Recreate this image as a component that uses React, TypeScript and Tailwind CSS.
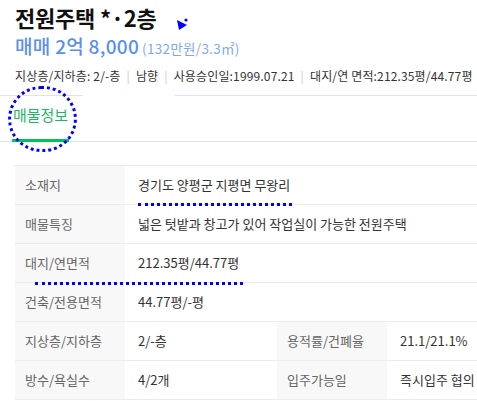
import React from 'react';

/* ── Data ───────────────────────────────────────────────── */
const INFO_ITEMS = ['지상층/지하층: 2/-층', '남향', '사용승인일:1999.07.21', '대지/연 면적:212.35평/44.77평'];

const WIDE_ROWS = [
  { label: '소재지', value: '경기도 양평군 지평면 무왕리' },
  { label: '매물특징', value: '넓은 텃밭과 창고가 있어 작업실이 가능한 전원주택' },
  { label: '대지/연면적', value: '212.35평/44.77평' },
  { label: '건축/전용면적', value: '44.77평/-평' },
];

const SPLIT_ROWS = [
  { label: '지상층/지하층', value: '2/-층', label2: '용적률/건폐율', value2: '21.1/21.1%' },
  { label: '방수/욕실수', value: '4/2개', label2: '입주가능일', value2: '즉시입주 협의' },
];

const font = { fontFamily: '"Noto Sans CJK KR", "Noto Sans", sans-serif' };

/* ── Annotation helpers (blue marks drawn over the capture) ─ */
function DottedLine({ className }: { className: string }) {
  return <div className={`absolute h-[3px] border-t-[3px] border-dotted border-[#0000ff] ${className}`} />;
}

export default function App() {
  return (
    <div style={font} className="relative w-[477px] h-[401px] overflow-hidden bg-white text-[#333]">
      {/* Header */}
      <div className="px-[15px] pt-[1px]">
        <h1 className="text-[22px] leading-[32px] font-bold text-[#111] tracking-[-0.2px]">전원주택 *·2층</h1>
        <div className="flex items-baseline gap-[3px]">
          <span className="text-[19px] leading-[26px] font-medium text-[#5a8fec] tracking-[0.3px]">매매 2억 8,000</span>
          <span className="text-[13.5px] text-[#7fa9ee] tracking-[0.3px]">(132만원/3.3㎡)</span>
        </div>
        <div className="flex items-center mt-[9px] text-[12px] leading-[16px] text-[#333] whitespace-nowrap tracking-[0.15px]">
          {INFO_ITEMS.map((item, i) => (
            <React.Fragment key={item}>
              {i > 0 && <span className="mx-[6px] text-[#ccc]">|</span>}
              <span>{item}</span>
            </React.Fragment>
          ))}
        </div>
      </div>

      {/* Tabs */}
      <div className="flex mt-[11px]">
        <div className="w-[83px] border-t border-[#e2e2e2]" />
        <div className="w-[92px]" />
        <div className="flex-1 border-t border-[#e2e2e2]" />
      </div>
      <div className="border-b border-[#e2e2e2] h-[46px] flex items-end">
        <div className="ml-[12px] w-[57px] h-[46px] flex items-center justify-center border-b-[3px] border-[#00c35a] -mb-[1px]">
          <span className="text-[15px] text-[#1cb860] pb-[4px]">매물정보</span>
        </div>
      </div>

      {/* Detail table */}
      <div className="ml-[15px] mt-[23px] w-[520px] border-t border-[#e8e8e8] text-[13px]">
        {WIDE_ROWS.map(row => (
          <div key={row.label} className="grid grid-cols-[110px_1fr] h-[39px] border-b border-[#ececec]">
            <div className="bg-[#f8f8f8] pl-[10px] flex items-center text-[#666]">{row.label}</div>
            <div className="pl-[13px] flex items-center text-[#333]">{row.value}</div>
          </div>
        ))}
        {SPLIT_ROWS.map(row => (
          <div key={row.label} className="grid grid-cols-[110px_152px_110px_1fr] h-[39px] border-b border-[#ececec]">
            <div className="bg-[#f8f8f8] pl-[10px] flex items-center text-[#666]">{row.label}</div>
            <div className="pl-[13px] flex items-center text-[#333]">{row.value}</div>
            <div className="bg-[#f8f8f8] pl-[10px] flex items-center text-[#666]">{row.label2}</div>
            <div className="pl-[13px] flex items-center text-[#333] whitespace-nowrap">{row.value2}</div>
          </div>
        ))}
      </div>

      {/* Annotations */}
      <svg className="absolute left-[176px] top-[16px]" width="14" height="16" viewBox="0 0 14 16">
        <polygon points="1,4 11,9 3,14" fill="#0000ff" />
        <circle cx="10" cy="4" r="1.6" fill="#0000ff" />
      </svg>
      <div className="absolute left-[8px] top-[86px] w-[69px] h-[66px] rounded-full border-[3px] border-dotted border-[#0000ff]" />
      <DottedLine className="left-[138px] top-[203px] w-[154px]" />
      <DottedLine className="left-[35px] top-[282px] w-[208px]" />
    </div>
  );
}
